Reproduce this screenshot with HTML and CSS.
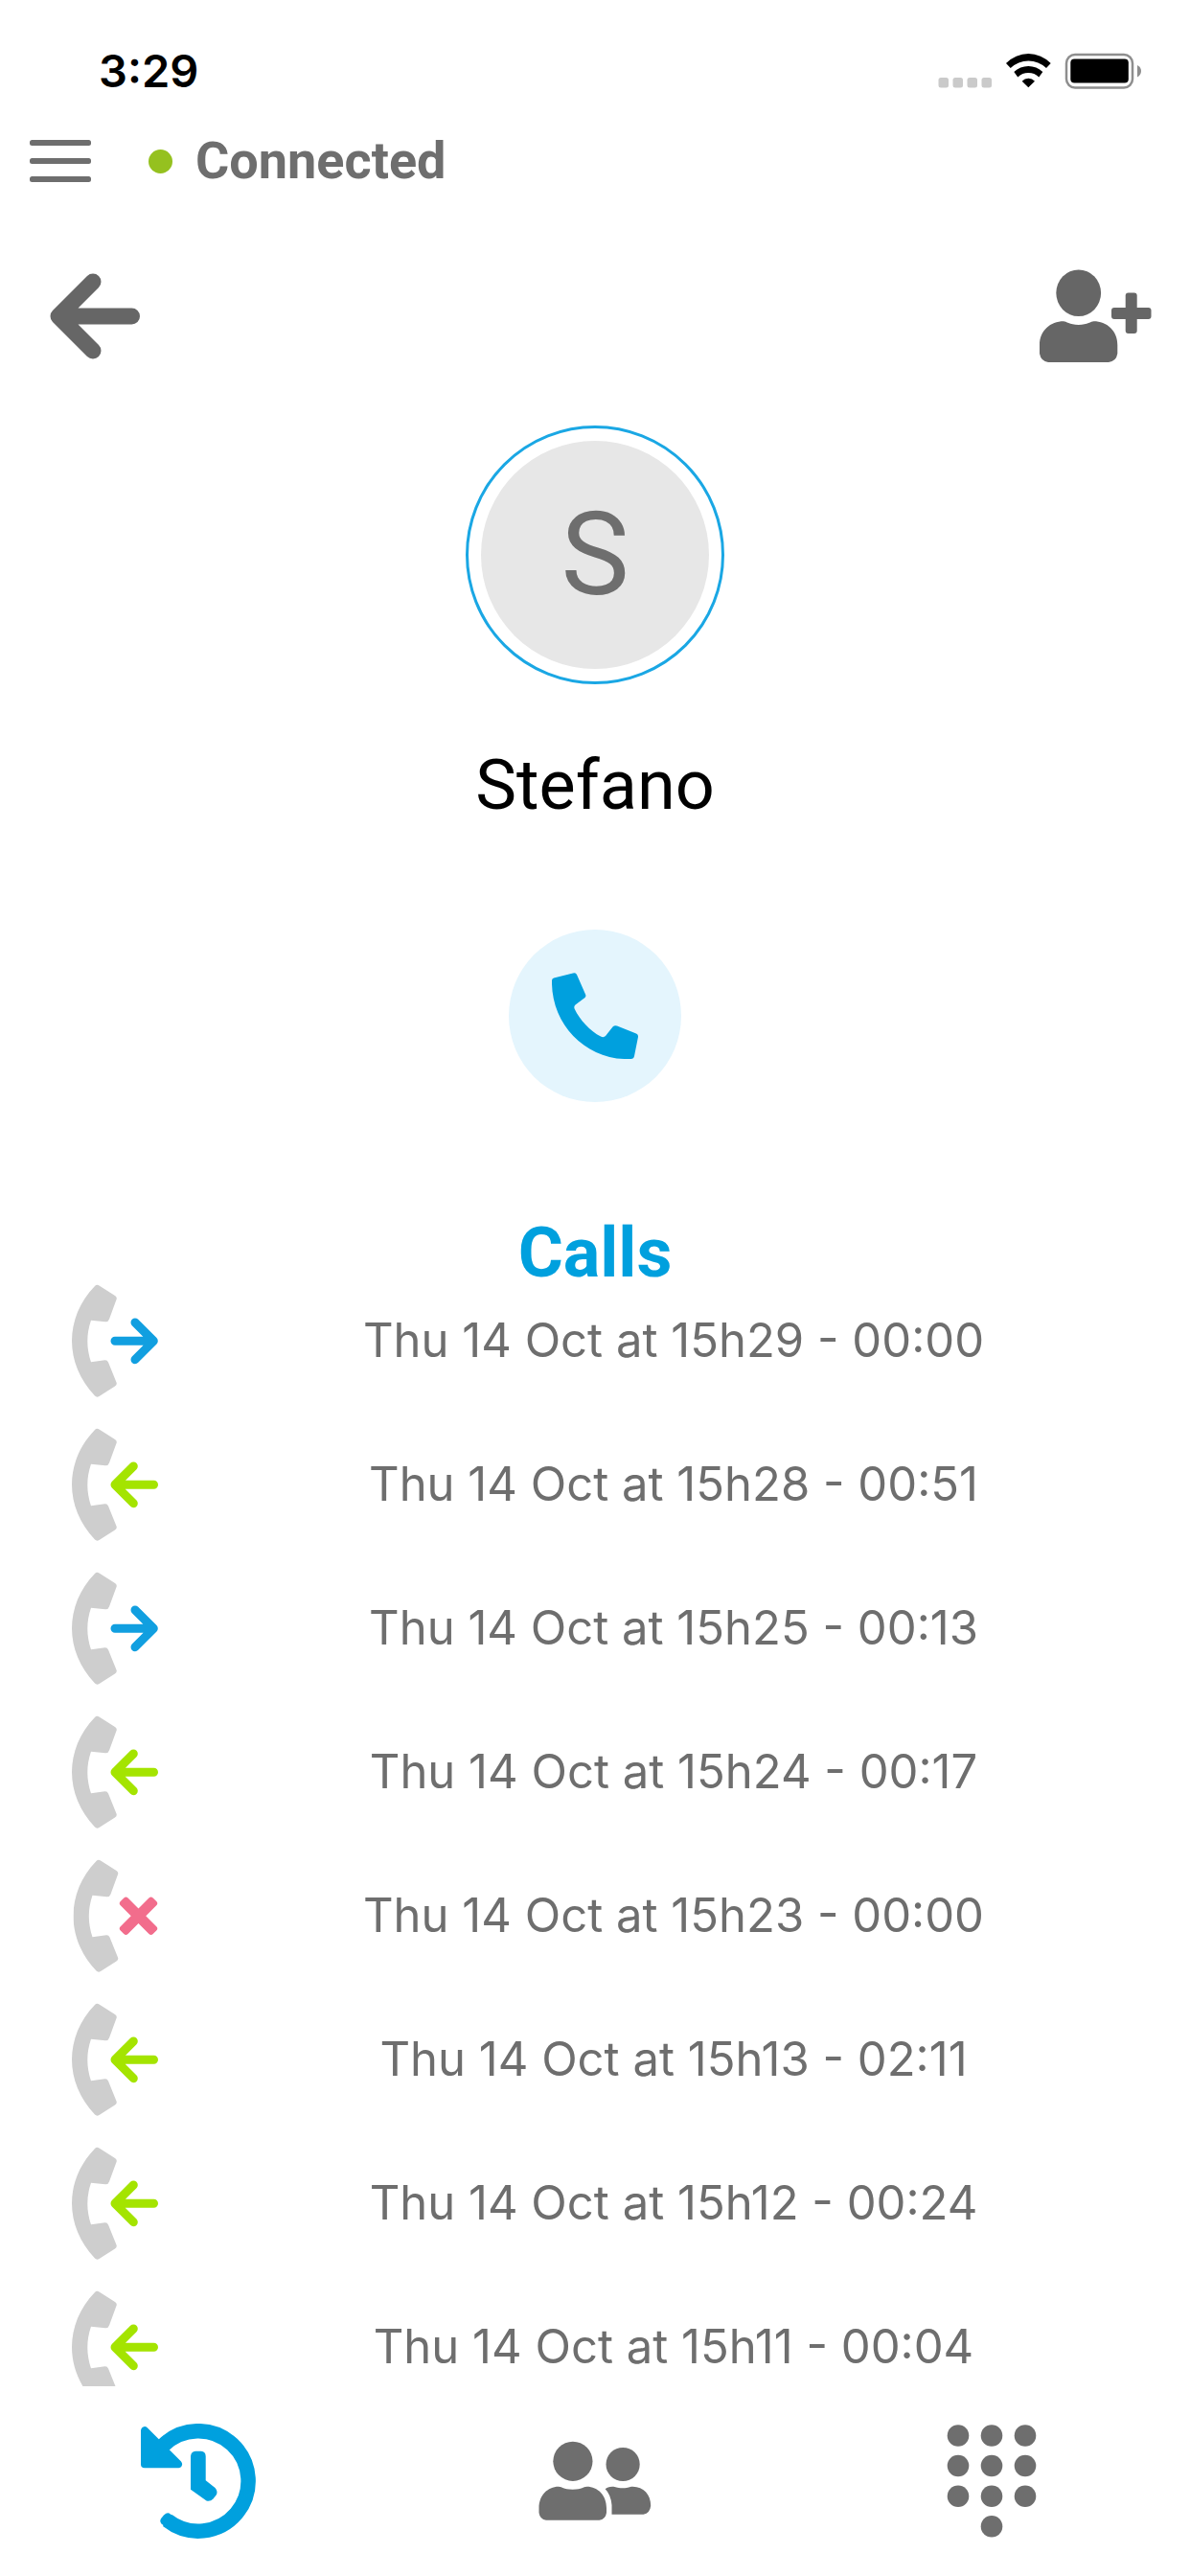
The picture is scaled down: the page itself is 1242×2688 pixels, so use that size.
FILE: index.html
```html
<!DOCTYPE html>
<html lang="en">
<head>
    <meta charset="UTF-8">
    <meta name="viewport" content="width=device-width, initial-scale=1.0">
    <title>Stefano</title>
    <link rel="stylesheet" href="styles.css">
</head>
<body>
    <!-- shared call icons -->
    <svg class="symbols" aria-hidden="true">
        <symbol id="handset" viewBox="0 0 90 120">
            <path fill="#cecece" d="M24 3Q26 1 28.500 2.500L45 13Q47.500 14.500 46.500 17L39 37.500Q38 40.500 35 40.300L20 38.700Q12.600 60.300 20 82.300L34.500 80.200Q37 80 38 82.500L46.500 103.500Q47.500 106 45 107.500L28.500 118Q26 119.500 24 117.500C-8 84 -8 36 24 3Z"/>
        </symbol>
        <symbol id="call-out" viewBox="0 0 90 120">
            <use href="#handset"/>
            <path class="arrow" stroke="#119fe0" d="M66 41L85.300 60.300L66 79.700M45 60.300H85"/>
        </symbol>
        <symbol id="call-in" viewBox="0 0 90 120">
            <use href="#handset"/>
            <path class="arrow" stroke="#a4e400" d="M64.300 41L45 60.300L64.300 79.700M45 60.300H85.500"/>
        </symbol>
        <symbol id="call-missed" viewBox="0 0 90 120">
            <use href="#handset" x="1.500"/>
            <g fill="#f26d8c" transform="translate(69.500 60.300) rotate(45)">
                <rect x="-24" y="-5.500" width="48" height="11" rx="3"/>
                <rect x="-5.500" y="-24" width="11" height="48" rx="3"/>
            </g>
        </symbol>
    </svg>

    <div class="status">
        <span class="time">3:29</span>
        <svg width="220" height="44" viewBox="0 0 220 44" aria-hidden="true">
            <g fill="#cacaca">
                <rect x="3.500" y="29" width="10.500" height="10.500" rx="2.500"/>
                <rect x="18.500" y="29" width="10.500" height="10.500" rx="2.500"/>
                <rect x="33.500" y="29" width="10.500" height="10.500" rx="2.500"/>
                <rect x="48.500" y="29" width="10.500" height="10.500" rx="2.500"/>
            </g>
            <path d="M74 14A32.500 32.500 0 0 1 120.700 14L116 19A27 27 0 0 0 78.700 19ZM82.300 23A21.800 21.800 0 0 1 112.300 23L108.300 28.500A16 16 0 0 0 86.300 28.500ZM90.700 32.700A9 9 0 0 1 104 32.700L97.300 39.300Z"/>
            <rect x="137" y="5" width="69" height="34.500" rx="9" fill="none" stroke="#8e8e8e" stroke-width="2.500"/>
            <rect x="141.300" y="9.500" width="60.500" height="25" rx="4"/>
            <path fill="#8e8e8e" d="M211 16Q215 18 215 22T211 28.500Z"/>
        </svg>
    </div>

    <header class="topbar">
        <button class="menu" aria-label="Menu">
            <svg width="64" height="46" viewBox="0 0 64 46" fill="#6e6e6e">
                <rect y="1" width="64" height="6" rx="2.500"/>
                <rect y="20" width="64" height="6" rx="2.500"/>
                <rect y="39" width="64" height="6" rx="2.500"/>
            </svg>
        </button>
        <span class="dot"></span>
        <span class="state">Connected</span>
    </header>

    <div class="toolbar">
        <button aria-label="Back">
            <svg width="94" height="90" viewBox="0 0 94 90" fill="none" stroke="#666" stroke-width="17" stroke-linecap="round" stroke-linejoin="round">
                <path d="M45 9L9 45L45 81M9 45H85.500"/>
            </svg>
        </button>
        <button aria-label="Add contact">
            <svg width="117" height="98" viewBox="0 0 117 98" fill="#666">
                <ellipse cx="40.700" cy="24.800" rx="23.400" ry="24.300"/>
                <path d="M25 54.300C28 54.300 31 58 40.700 58S53.500 54.300 56.500 54.300C70 54.300 81.300 64 81.300 79V88Q80 96 72 97H9Q1.500 96 0 88V79C0 64 11.500 54.300 25 54.300Z"/>
                <rect x="89.700" y="24.500" width="12" height="42.500" rx="3"/>
                <rect x="75" y="40" width="41.500" height="12" rx="3"/>
            </svg>
        </button>
    </div>

    <section class="profile">
        <div class="avatar"><span>S</span></div>
        <h1>Stefano</h1>
        <button class="call" aria-label="Call Stefano">
            <svg width="90" height="90" viewBox="0 0 90 90" fill="#00a0de">
                <path d="M0 8Q0 6 2 5.500L22 .5Q25 -.5 26 2L35 22.500Q36 24.500 34.500 26L24.500 33.500Q22.500 35.500 23.800 38C29 49 40 61 51 66.500Q54 68 56 66L63.500 56.500Q65.500 54.500 68 55.500L88 63.500Q90.300 64.500 90 67L86 87Q85.500 90 82.500 90C36 92 -1 54 0 8Z"/>
            </svg>
        </button>
    </section>

    <section class="history">
        <h2>Calls</h2>
        <ul>
            <li><svg><use href="#call-out"/></svg><span>Thu 14 Oct at 15h29 - 00:00</span></li>
            <li><svg><use href="#call-in"/></svg><span>Thu 14 Oct at 15h28 - 00:51</span></li>
            <li><svg><use href="#call-out"/></svg><span>Thu 14 Oct at 15h25 - 00:13</span></li>
            <li><svg><use href="#call-in"/></svg><span>Thu 14 Oct at 15h24 - 00:17</span></li>
            <li><svg><use href="#call-missed"/></svg><span>Thu 14 Oct at 15h23 - 00:00</span></li>
            <li><svg><use href="#call-in"/></svg><span>Thu 14 Oct at 15h13 - 02:11</span></li>
            <li><svg><use href="#call-in"/></svg><span>Thu 14 Oct at 15h12 - 00:24</span></li>
            <li><svg><use href="#call-in"/></svg><span>Thu 14 Oct at 15h11 - 00:04</span></li>
        </ul>
    </section>

    <nav class="tabs">
        <a href="#history" aria-label="History">
            <svg width="120" height="120" viewBox="0 0 120 120" fill="#00a0de">
                <path fill="none" stroke="#00a0de" stroke-width="15.500" d="M23 23A52.200 52.200 0 1 1 27.700 101"/>
                <path d="M29.500 93.500L34.500 97L26 108L21.500 104.500Q19 101.500 21.500 98.500L24 95.500Q27 92.500 29.500 93.500Z"/>
                <path d="M0 7Q.5 3.500 4 3Q5.500 3 6.500 4L42 39.500Q44 42 42.500 44.500Q41.500 46.300 39.500 46.300H4Q0 46.300 0 42.500Z"/>
                <path d="M52 34Q52.500 29 57 28.700H63Q67.500 29 67.700 34V59.300L77.500 67Q80.500 70.500 79 74L75.500 78.500Q72.500 81.500 68.500 80.500L52 68.700Z"/>
            </svg>
        </a>
        <a href="#contacts" aria-label="Contacts">
            <svg width="118" height="84" viewBox="0 0 118 84" fill="#6e6e6e">
                <circle cx="35.900" cy="21.300" r="20.600"/>
                <path d="M21 47.700C25.500 47.700 25 50.700 35.700 50.700S46 47.700 50.500 47.700C62 47.700 71 57 71 70V75Q70 82 63.500 82.700H8Q1.500 82 .5 75V70C.5 57 9.500 47.700 21 47.700Z"/>
                <circle cx="88.100" cy="24.500" r="17.600"/>
                <path d="M69.700 50.300Q72 47.700 77 47.700C81 47.700 81 49.300 88 49.300S94 47.700 98.500 47.700C109.500 47.700 117.200 56 117.200 67.500Q116.500 75.500 109.500 76.700H76.500V67Q75.500 56 69.700 50.300Z"/>
            </svg>
        </a>
        <a href="#keypad" aria-label="Keypad">
            <svg width="94" height="118" viewBox="0 0 94 118" fill="#6e6e6e">
                <circle cx="12" cy="11.500" r="11.300"/><circle cx="47" cy="11.500" r="11.300"/><circle cx="82" cy="11.500" r="11.300"/>
                <circle cx="12" cy="43" r="11.300"/><circle cx="47" cy="43" r="11.300"/><circle cx="82" cy="43" r="11.300"/>
                <circle cx="12" cy="74.700" r="11.300"/><circle cx="47" cy="74.700" r="11.300"/><circle cx="82" cy="74.700" r="11.300"/>
                <circle cx="47" cy="106.300" r="11.300"/>
            </svg>
        </a>
    </nav>
</body>
</html>
```
FILE: styles.css
```css
*{
    box-sizing: border-box;
    margin: 0;
    padding: 0;
}

body{
    display: flex;
    flex-direction: column;
    height: 100vh;
    background-color: #fff;
    color: #6e6e6e;
    font-family: Roboto, sans-serif;
}

button{
    border: none;
    background: none;
    cursor: pointer;
}

svg{
    display: block;
}

.symbols{
    position: absolute;
    width: 0;
    height: 0;
}

.status{
    display: flex;
    justify-content: space-between;
    align-items: center;
    flex-shrink: 0;
    height: 104px;
    padding: 44px 46px 0 103px;
}

.time{
    color: #000;
    font-family: Inter, sans-serif;
    font-size: 47px;
    font-weight: 600;
    line-height: 60px;
}

.topbar{
    display: flex;
    align-items: center;
    flex-shrink: 0;
    height: 128px;
    padding: 0 31px;
}

.dot{
    width: 25px;
    height: 25px;
    margin: 0 24px 0 60px;
    border-radius: 50%;
    background-color: #95c11f;
}

.state{
    font-size: 54px;
    font-weight: 700;
    line-height: 64px;
}

.toolbar{
    display: flex;
    justify-content: space-between;
    align-items: center;
    flex-shrink: 0;
    height: 196px;
    padding: 0 40px 0 52px;
}

.profile{
    display: flex;
    flex-direction: column;
    align-items: center;
    flex-shrink: 0;
    padding-top: 16px;
}

.avatar{
    width: 270px;
    height: 270px;
    padding: 13px;
    border: 3px solid #1aa7e4;
    border-radius: 50%;
}

.avatar span{
    display: block;
    border-radius: 50%;
    background-color: #e7e7e7;
    font-size: 120px;
    line-height: 238px;
    text-align: center;
}

.profile h1{
    margin: 64px 0 108px;
    color: #000;
    font-size: 72px;
    font-weight: 400;
    line-height: 84px;
}

.call{
    display: flex;
    justify-content: center;
    align-items: center;
    width: 180px;
    height: 180px;
    border-radius: 50%;
    background-color: #e4f5fd;
}

/* scrolls under the tabs */
.history{
    flex: 1;
    min-height: 0;
    overflow: hidden;
    padding-top: 127px;
}

.history h2{
    color: #00a0de;
    font-size: 72px;
    line-height: 62px;
    text-align: center;
}

.history li{
    display: flex;
    align-items: center;
    gap: 74px;
    margin-bottom: 30px;
    padding: 0 75px;
}

.history li svg{
    width: 90px;
    height: 120px;
}

.history li span{
    flex: 1;
    font-family: Inter, sans-serif;
    font-size: 49px;
    line-height: 60px;
    text-align: center;
}

.arrow{
    fill: none;
    stroke-width: 9px;
    stroke-linecap: round;
    stroke-linejoin: round;
}

.tabs{
    display: grid;
    grid-template-columns: repeat(3, 1fr);
    flex-shrink: 0;
    height: 198px;
}

.tabs a{
    display: flex;
    justify-content: center;
    align-items: center;
}
```
